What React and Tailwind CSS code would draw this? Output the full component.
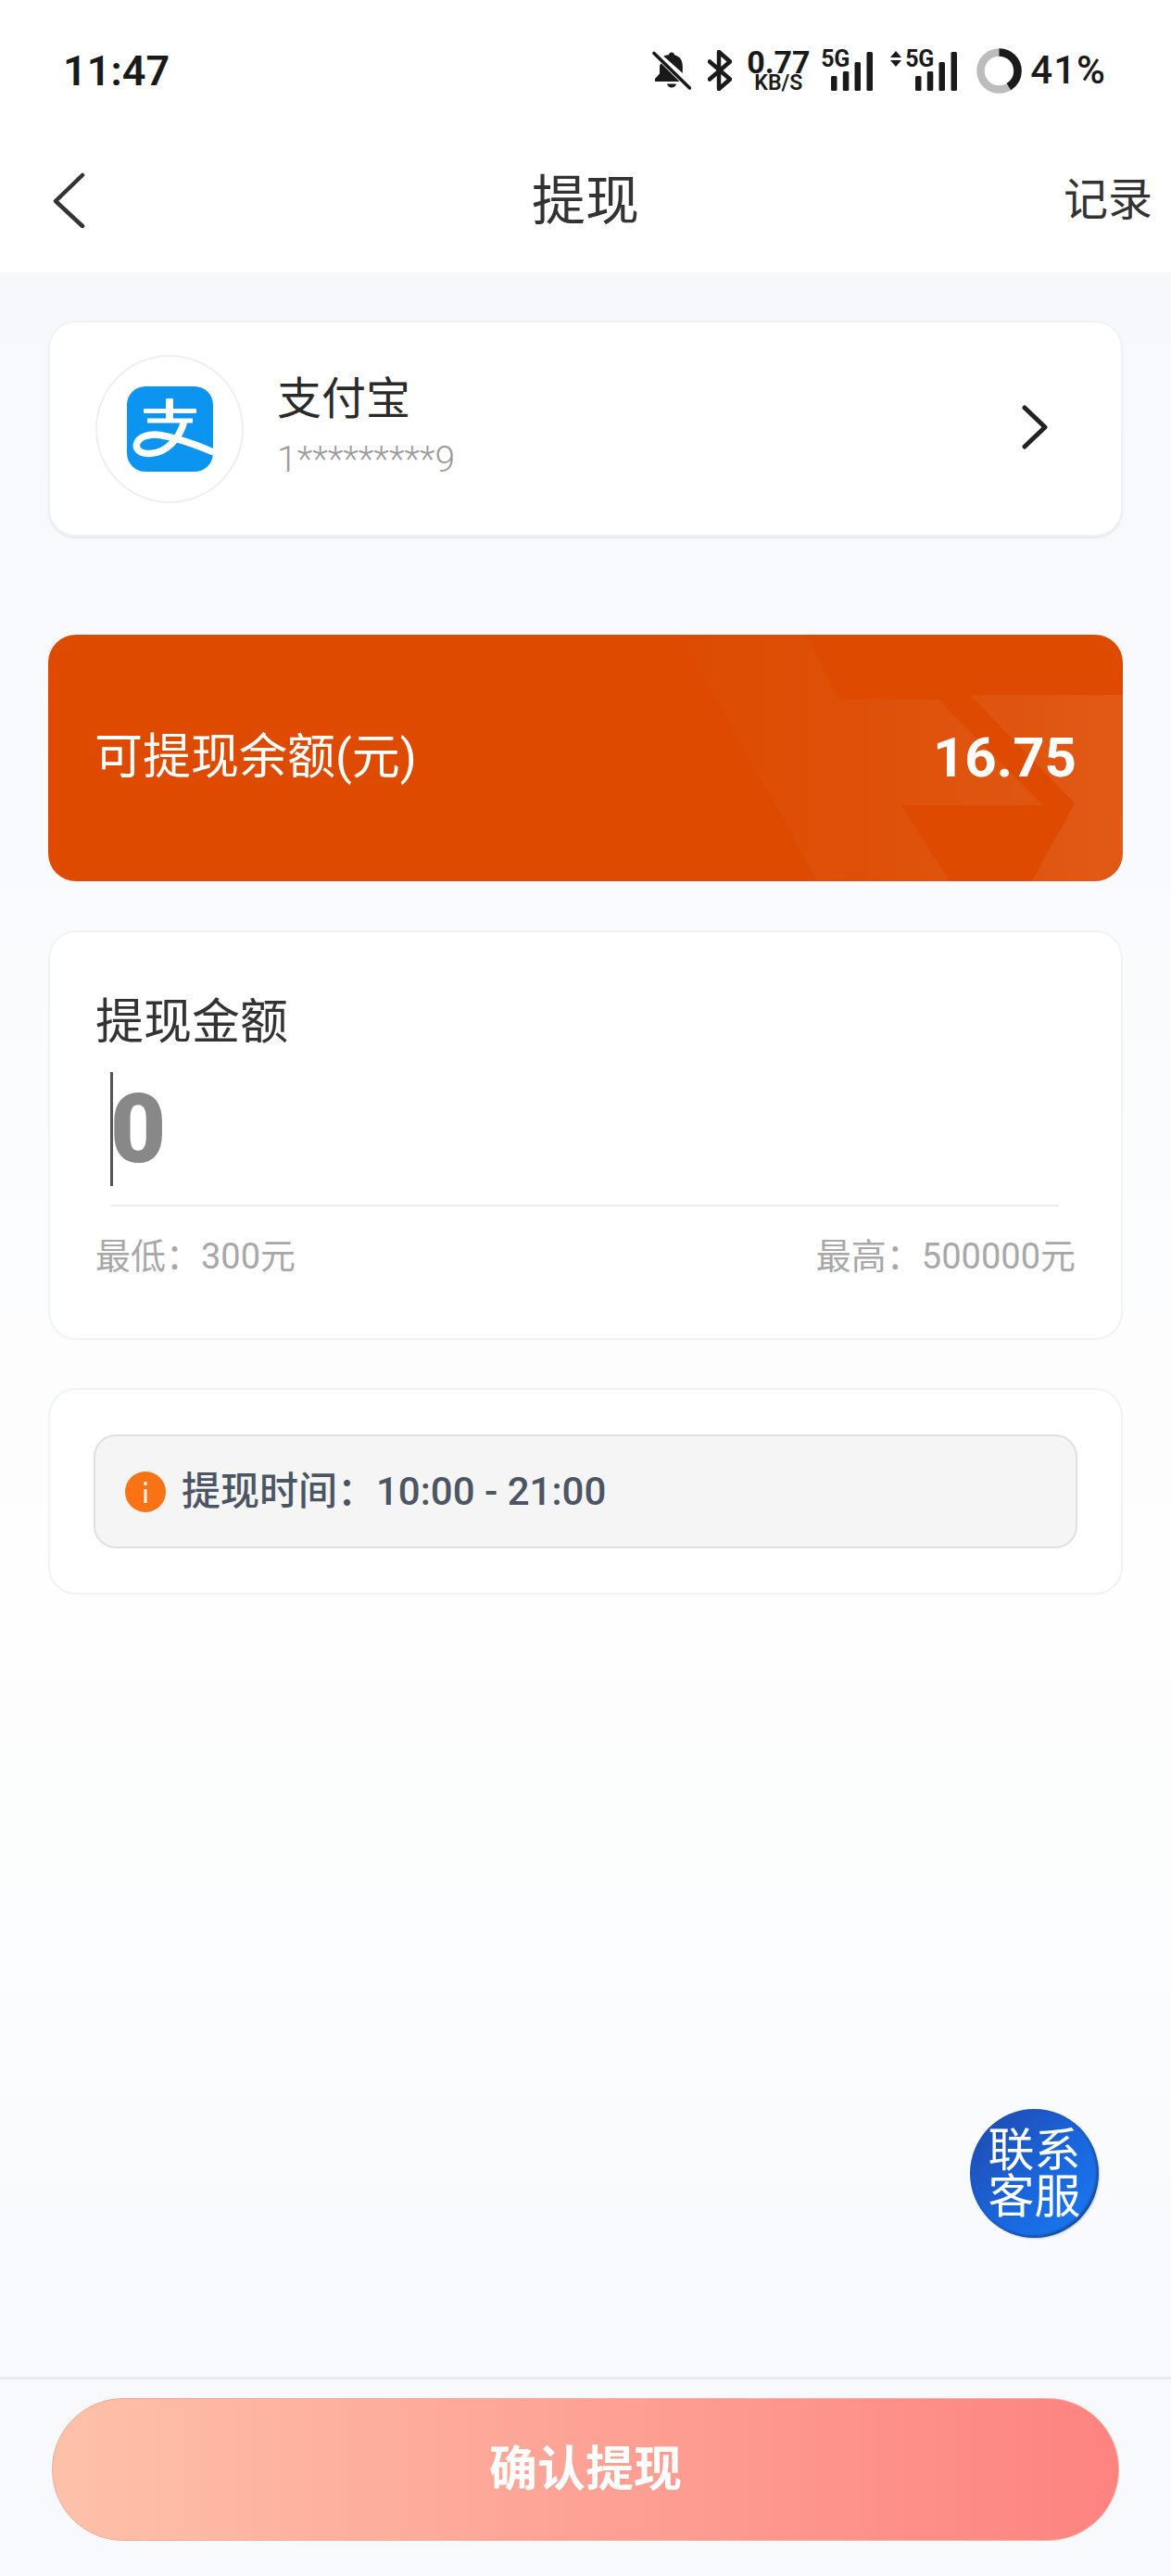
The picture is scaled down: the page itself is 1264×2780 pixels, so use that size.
import React from "react";

function BellOff() {
  return (
    <svg width="42" height="42" viewBox="0 0 42 42" className="shrink-0">
      <path d="M21 1.500c1.700 0 3 1.200 3 2.800 6 1.400 8.800 6 8.800 12.200v7.500L12.200 5.400C14.200 4.800 17 4 18 4.300c0-1.600 1.300-2.800 3-2.800z" fill="#1a1a1a" />
      <path d="M9.800 13.500 29.500 33H3v-3l5-5.500V17c0-1.200.5-2.400 1.800-3.500z" fill="#1a1a1a" />
      <path d="M16 35.500h10c-.6 2.400-2.600 4-5 4s-4.400-1.600-5-4z" fill="#1a1a1a" />
      <path d="M2 2.500 40.500 40" stroke="#1a1a1a" strokeWidth="3.600" strokeLinecap="round" />
    </svg>
  );
}

function Bluetooth() {
  return (
    <svg width="26" height="44" viewBox="0 0 26 44" fill="none" className="shrink-0">
      <path d="M2 12.500 24 31.500 12 42V2l12 10.500L2 31.500" stroke="#1a1a1a" strokeWidth="4.500" strokeLinecap="round" strokeLinejoin="round" />
    </svg>
  );
}

function Bars() {
  return (
    <svg width="45" height="42" viewBox="0 0 45 42" className="shrink-0">
      <rect x="0" y="26" width="6.500" height="16" rx="1.500" fill="#1a1a1a" />
      <rect x="12.800" y="21" width="6.500" height="21" rx="1.500" fill="#1a1a1a" />
      <rect x="25.500" y="11" width="6.500" height="31" rx="1.500" fill="#1a1a1a" />
      <rect x="38.500" y="0" width="6.500" height="42" rx="1.500" fill="#1a1a1a" />
    </svg>
  );
}

function Ring() {
  const r = 20;
  const c = 2 * Math.PI * r;
  return (
    <svg width="49" height="49" viewBox="0 0 49 49" fill="none" className="shrink-0">
      <circle cx="24.500" cy="24.500" r={r} stroke="#bcbcbc" strokeWidth="8.500" />
      <circle
        cx="24.500"
        cy="24.500"
        r={r}
        stroke="#1a1a1a"
        strokeWidth="8.500"
        strokeDasharray={`${c * 0.41} ${c}`}
        transform="rotate(-90 24.500 24.500)"
      />
    </svg>
  );
}

function AlipayLogo() {
  return (
    <svg width="93" height="92" viewBox="0 0 93 92" fill="none">
      <defs>
        <clipPath id="alipay-clip">
          <rect width="93" height="92" rx="20" />
        </clipPath>
      </defs>
      <rect width="93" height="92" rx="20" fill="#0c95f0" />
      <g clipPath="url(#alipay-clip)" stroke="#fff" strokeLinecap="butt">
        <path d="M46 13v24" strokeWidth="8" />
        <path d="M18 26.500h57" strokeWidth="5" />
        <path d="M22 37h49" strokeWidth="5" />
        <path d="M62 37C57 56 43 72 25 72.500 14 73 9.500 67.500 10.500 62.500 12 54.500 24 50.500 36 52.500 53 55.500 73 62 96 72" strokeWidth="7.500" />
      </g>
    </svg>
  );
}

function BalanceShapes() {
  return (
    <svg className="absolute inset-0 h-full w-full" viewBox="0 0 1160 266" preserveAspectRatio="none" fill="none">
      <defs>
        <linearGradient id="shape-a" gradientUnits="userSpaceOnUse" x1="683" y1="0" x2="1074" y2="0">
          <stop offset="0" stopColor="#fff" stopOpacity="0.01" />
          <stop offset="0.4" stopColor="#fff" stopOpacity="0.028" />
          <stop offset="1" stopColor="#fff" stopOpacity="0.07" />
        </linearGradient>
        <linearGradient id="shape-b" gradientUnits="userSpaceOnUse" x1="995" y1="0" x2="1160" y2="0">
          <stop offset="0" stopColor="#fff" stopOpacity="0.05" />
          <stop offset="1" stopColor="#fff" stopOpacity="0.09" />
        </linearGradient>
      </defs>
      <path d="M683 0H818L854 70H961L1074 184H921L973 266H830Z" fill="url(#shape-a)" />
      <path d="M995 65H1160V266H1062L1108 182Z" fill="url(#shape-b)" />
    </svg>
  );
}

export default function App() {
  return (
    <div className="relative flex h-[2780px] w-[1264px] flex-col overflow-hidden bg-[linear-gradient(180deg,#f5f7fb_0%,#f9fafd_30%,#fefefe_62%,#fbfcfd_78%,#f7f9fc_92%)] font-['Roboto','Noto_Sans_CJK_SC',sans-serif]">
      <header className="flex h-[294px] shrink-0 flex-col bg-white">
        <div className="flex h-[152px] items-center justify-between pl-[68px] pr-[70px] text-[#1a1a1a]">
          <span className="text-[45px] font-semibold leading-none">11:47</span>
          <div className="flex items-center">
            <BellOff />
            <div className="ml-[18px]">
              <Bluetooth />
            </div>
            <div className="ml-[17px] flex w-[66px] flex-col items-center">
              <span className="text-[34px] font-bold leading-[27px]">0.77</span>
              <span className="text-[23px] font-semibold leading-[17px]">KB/S</span>
            </div>
            <div className="relative ml-[13px] h-[44px] w-[56px] shrink-0">
              <span className="absolute left-0 top-[-1px] text-[25px] font-bold leading-[22px] tracking-[-0.5px]">5G</span>
              <div className="absolute bottom-0 right-0">
                <Bars />
              </div>
            </div>
            <div className="relative ml-[19px] h-[44px] w-[72px] shrink-0">
              <svg width="12" height="17" viewBox="0 0 12 17" className="absolute left-0 top-[1px]">
                <path d="M6 0l6 7H0zM0 10h12l-6 7z" fill="#1a1a1a" />
              </svg>
              <span className="absolute left-[16px] top-[-1px] text-[25px] font-bold leading-[22px] tracking-[-0.5px]">5G</span>
              <div className="absolute bottom-0 right-0">
                <Bars />
              </div>
            </div>
            <div className="ml-[21px]">
              <Ring />
            </div>
            <span className="ml-[9px] text-[42px] font-medium leading-none tracking-[1px]">41%</span>
          </div>
        </div>
        <nav className="grid h-[128px] grid-cols-[1fr_auto_1fr] items-center px-[24px]">
          <svg width="36" height="60" viewBox="0 0 36 60" fill="none" className="ml-[32px]">
            <path d="M33 3 4 31l29 27" stroke="#333" strokeWidth="4.500" strokeLinecap="round" strokeLinejoin="round" />
          </svg>
          <h1 className="mt-[2px] text-[58px] font-normal leading-none text-[#333]">提现</h1>
          <span className="mr-[-4px] justify-self-end text-[48px] leading-none text-[#333]">记录</span>
        </nav>
      </header>

      <main className="flex flex-col px-[52px] pt-[52px]">
        <section className="flex h-[233px] items-center rounded-[30px] border-2 border-[#f1f2f5] bg-white pl-[49px] pr-[78px] shadow-[0_2px_2px_rgba(0,0,0,0.07)]">
          <div className="flex h-[160px] w-[160px] shrink-0 items-center justify-center rounded-full border-2 border-[#efefef]">
            <AlipayLogo />
          </div>
          <div className="ml-[36px] mt-[-2px] flex flex-col">
            <span className="text-[48px] leading-[50px] text-[#2a2a2a]">支付宝</span>
            <span className="mt-[18px] text-[39px] font-light leading-[44px] text-[#9c9c9c]">1*********9</span>
          </div>
          <svg width="30" height="48" viewBox="0 0 30 48" fill="none" className="ml-auto mt-[-4px]">
            <path d="M4 3l22 21L4 45" stroke="#222" strokeWidth="5" strokeLinecap="round" strokeLinejoin="round" />
          </svg>
        </section>

        <section className="relative mt-[106px] flex h-[266px] items-center justify-between overflow-hidden rounded-[30px] bg-[#dd4a00] pl-[50px] pr-[50px] text-white">
          <BalanceShapes />
          <span className="relative text-[52px] leading-none">可提现余额(元)</span>
          <span className="relative text-[60px] font-bold leading-none">16.75</span>
        </section>

        <section className="mt-[53px] flex h-[442px] flex-col rounded-[30px] border-2 border-[#f1f2f5] bg-white px-[49px] pt-[72px]">
          <span className="text-[52px] leading-[52px] text-[#333]">提现金额</span>
          <div className="ml-[16px] mt-[27px] flex h-[123px] items-center">
            <span className="h-full w-[3px] shrink-0 bg-[#555]" />
            <span className="ml-[-3px] text-[104px] font-black leading-none text-[#888]">0</span>
          </div>
          <div className="ml-[16px] mr-[18px] mt-[20px] h-[2px] bg-[#eeeeee]" />
          <div className="mt-[32px] flex justify-between text-[38px] leading-[44px] text-[#a8a8a8]">
            <span>最低：300元</span>
            <span>最高：500000元</span>
          </div>
        </section>

        <section className="mt-[52px] flex h-[223px] items-center rounded-[30px] border-2 border-[#f1f2f5] bg-white px-[47px]">
          <div className="flex h-[123px] w-full items-center rounded-[24px] border-2 border-[#e0e0e0] bg-[#f5f5f5] pl-[32px]">
            <svg width="44" height="44" viewBox="0 0 44 44" className="shrink-0">
              <circle cx="22" cy="22" r="22" fill="#f97316" />
              <rect x="20.500" y="19" width="3" height="15" fill="#fff" opacity="0.95" />
              <rect x="20.500" y="11" width="3" height="4" fill="#fff" opacity="0.95" />
            </svg>
            <span className="ml-[17px] text-[42px] font-medium leading-none text-[#4b5563]">提现时间：10:00 - 21:00</span>
          </div>
        </section>
      </main>

      <button className="absolute left-[1047px] top-[2276px] flex h-[139px] w-[139px] items-center justify-center rounded-full bg-[linear-gradient(135deg,#2048ac_0%,#1a66dc_55%,#1a7cf4_100%)] text-center text-[50px] font-normal leading-[50px] text-white shadow-[inset_-2px_-2px_3px_rgba(10,40,90,0.55),1px_1px_2px_rgba(0,0,0,0.2)]">
        <span className="w-[100px]">联系客服</span>
      </button>

      <footer className="mt-auto h-[215px] shrink-0 border-t-[3px] border-[#e9ebf1] bg-[#f7f9fc] px-[56px] pt-[20px]">
        <button className="flex h-[154px] w-full items-center justify-center rounded-full border border-[#f5ab96] bg-[linear-gradient(90deg,#fdc1a9_0%,#fd8380_100%)] pt-[2px] text-[52px] font-bold leading-none text-white">
          确认提现
        </button>
      </footer>
    </div>
  );
}
